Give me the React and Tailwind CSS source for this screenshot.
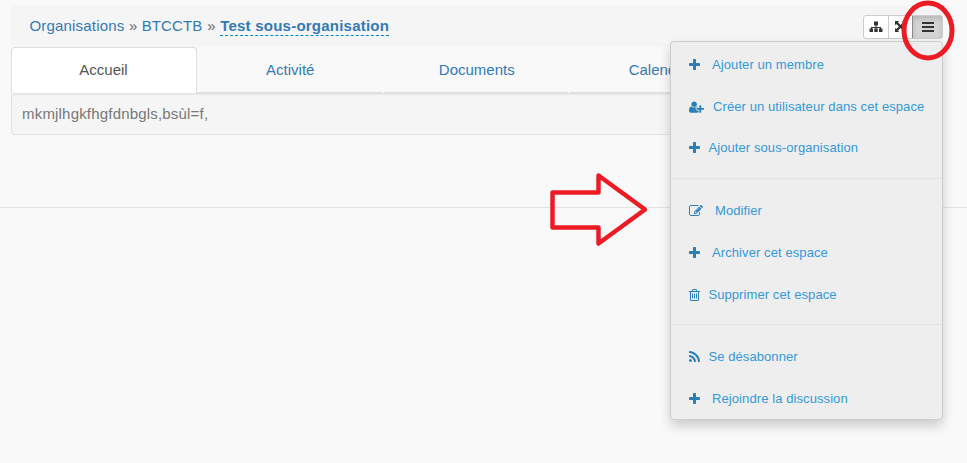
import React from "react";

const glyphs = {
  plus: {
    w: 11,
    box: "192 0 1408 1792",
    d: "M1600 736v192q0 40-28 68t-68 28h-416v416q0 40-28 68t-68 28h-192q-40 0-68-28t-28-68v-416h-416q-40 0-68-28t-28-68v-192q0-40 28-68t68-28h416v-416q0-40 28-68t68-28h192q40 0 68 28t28 68v416h416q40 0 68 28t28 68z",
  },
  userPlus: {
    w: 15,
    box: "0 0 2048 1792",
    d: "M704 896q-159 0-271.5-112.5t-112.5-271.5 112.5-271.5 271.5-112.5 271.5 112.5 112.5 271.5-112.5 271.5-271.5 112.5zm960 128h352q13 0 22.5 9.5t9.5 22.5v192q0 13-9.5 22.5t-22.5 9.5h-352v352q0 13-9.5 22.5t-22.5 9.5h-192q-13 0-22.5-9.5t-9.5-22.5v-352h-352q-13 0-22.5-9.5t-9.5-22.5v-192q0-13 9.5-22.5t22.5-9.5h352v-352q0-13 9.5-22.5t22.5-9.5h192q13 0 22.5 9.5t9.5 22.5v352zm-736 224q0 52 38 90t90 38h256v238q-68 50-171 50h-874q-121 0-194-69t-73-190q0-53 3.5-103.5t14-109 26.5-108.5 43-97.5 62-81 85.5-53.5 111.5-20q19 0 39 17 79 61 154.5 91.5t164.5 30.5 164.5-30.5 154.5-91.5q20-17 39-17 132 0 217 96h-223q-52 0-90 38t-38 90v192z",
  },
  edit: {
    w: 14,
    box: "0 0 1792 1792",
    d: "M888 1184l116-116-152-152-116 116v56h96v96h56zm440-720q-16-16-33 1l-350 350q-17 17-1 33t33-1l350-350q17-17 1-33zm80 594v190q0 119-84.5 203.5t-203.5 84.5h-832q-119 0-203.5-84.5t-84.5-203.5v-832q0-119 84.5-203.5t203.5-84.5h832q63 0 117 25 15 7 18 23 3 17-9 29l-49 49q-14 14-32 8-23-6-45-6h-832q-66 0-113 47t-47 113v832q0 66 47 113t113 47h832q66 0 113-47t47-113v-126q0-13 9-22l64-64q15-15 35-7t20 29zm-96-738l288 288-672 672h-288v-288zm444 132l-92 92-288-288 92-92q28-28 68-28t68 28l152 152q28 28 28 68t-28 68z",
  },
  trash: {
    w: 11,
    box: "192 0 1408 1792",
    d: "M704 736v576q0 14-9 23t-23 9h-64q-14 0-23-9t-9-23v-576q0-14 9-23t23-9h64q14 0 23 9t9 23zm256 0v576q0 14-9 23t-23 9h-64q-14 0-23-9t-9-23v-576q0-14 9-23t23-9h64q14 0 23 9t9 23zm256 0v576q0 14-9 23t-23 9h-64q-14 0-23-9t-9-23v-576q0-14 9-23t23-9h64q14 0 23 9t9 23zm128 724v-948h-896v948q0 22 7 40.5t14.5 27 10.5 8.5h832q3 0 10.5-8.5t14.5-27 7-40.5zm-672-1076h448l-48-117q-7-9-17-11h-317q-10 2-17 11zm928 32v64q0 14-9 23t-23 9h-96v948q0 83-47 143.5t-113 60.5h-832q-66 0-113-58.5t-47-141.5v-952h-96q-14 0-23-9t-9-23v-64q0-14 9-23t23-9h309l70-167q15-37 54-63t79-26h320q40 0 79 26t54 63l70 167h309q14 0 23 9t9 23z",
  },
  rss: {
    w: 11,
    box: "192 0 1408 1792",
    d: "M576 1344q0 80-56 136t-136 56-136-56-56-136 56-136 136-56 136 56 56 136zm512 123q2 28-17 48-18 21-47 21h-135q-25 0-43-16.5t-20-41.5q-22-229-184.5-391.5t-391.5-184.5q-25-2-41.5-20t-16.5-43v-135q0-29 21-47 17-17 43-17h5q160 13 306 80.5t259 181.5q114 113 181.5 259t80.5 306zm512 2q2 27-18 47-18 20-46 20h-143q-26 0-44.5-17.5t-19.5-42.5q-12-215-101-408.5t-231.5-336-336-231.5-408.5-102q-25-1-42.5-19.5t-17.5-43.5v-143q0-28 20-46 18-18 44-18h3q262 13 501.5 120t425.5 294q187 186 294 425.5t120 501.5z",
  },
};

function Glyph({ name }) {
  const g = glyphs[name];
  return (
    <svg width={g.w} height="14" viewBox={g.box} fill="currentColor" className="shrink-0 text-[#2980b9]">
      <path d={g.d} />
    </svg>
  );
}

function Item({ icon, gap, height = "h-[42px]", children }) {
  return (
    <li className={`flex ${height} items-center pl-[18px]`}>
      <Glyph name={icon} />
      <a className={`${gap} whitespace-nowrap`}>{children}</a>
    </li>
  );
}

function Divider({ space }) {
  return <li className={`${space} mb-[11px] h-px bg-[#e3e3e3]`} />;
}

function Menu() {
  return (
    <ul className="absolute top-[41px] left-[670px] h-[379px] w-[273px] rounded-[4px] border border-[#ccc] bg-[#eee] pt-[2px] text-[13px] tracking-[0.09px] text-[#3498db] shadow-[0_6px_12px_rgba(0,0,0,0.18)]">
      <Item icon="plus" gap="ml-[12px]">Ajouter un membre</Item>
      <Item icon="userPlus" gap="ml-[9px]">Créer un utilisateur dans cet espace</Item>
      <Item icon="plus" gap="ml-[8.400px]" height="h-[40px]">Ajouter sous-organisation</Item>
      <Divider space="mt-[10px]" />
      <Item icon="edit" gap="ml-[12px]">Modifier</Item>
      <Item icon="plus" gap="ml-[12px]">Archiver cet espace</Item>
      <Item icon="trash" gap="ml-[8.400px]">Supprimer cet espace</Item>
      <Divider space="mt-[8px]" />
      <Item icon="rss" gap="ml-[8.400px]">Se désabonner</Item>
      <Item icon="plus" gap="ml-[12px]">Rejoindre la discussion</Item>
    </ul>
  );
}

function Toolbar() {
  return (
    <div className="mt-px flex h-6 w-[80px] overflow-hidden rounded-[3px] border border-[#ccc] bg-white text-[#333]">
      <button className="flex w-[25px] items-center justify-center border-r border-[#ccc]">
        <svg width="14" height="12" viewBox="0 0 14 12" fill="currentColor">
          <path d="M5 0.500h4v4H7.500V6H12v1.500h1.500V11H10V7.500h1V7H7.500v.5H8.750V11h-3.500V7.500H6.500V7H3v.5h1V11H.5V7.500H2V6h4.500V4.500H5z" />
        </svg>
      </button>
      <button className="flex w-[23px] items-center justify-center">
        <svg width="11" height="11" viewBox="0 0 12 12" fill="currentColor">
          <path d="M0 0h4.500L3.200 1.300 6 4.300 8.800 1.300 7.500 0H12v4.500l-1.300-1.300L7.700 6l3 2.800L12 7.500V12H7.500l1.300-1.300L6 7.700l-2.800 3L4.500 12H0V7.500l1.300 1.300L4.300 6 1.300 3.200 0 4.500z" />
        </svg>
      </button>
      <button className="-my-px -mr-px flex flex-1 items-center justify-center rounded-r-[3px] border border-[#8c8c8c] bg-[#d4d4d4] shadow-[inset_0_3px_5px_rgba(0,0,0,0.125)]">
        <svg width="12" height="10" viewBox="0 0 12 10" fill="currentColor">
          <path d="M0 0h12v2H0zM0 4h12v2H0zM0 8h12v2H0z" />
        </svg>
      </button>
    </div>
  );
}

function Tab({ children }) {
  return (
    <li className="mr-[2px] flex flex-1 items-center justify-center border-b border-[#ddd] pt-[2px] pl-[2px] text-[#337ab7]">
      {children}
    </li>
  );
}

export default function App() {
  return (
    <div className="relative h-[463px] w-[967px] overflow-hidden bg-[#f9f9f9] pt-[5px] font-['Liberation_Sans',Arial,sans-serif] text-[15px] text-[#777]">
      <main className="ml-[11px] w-[932px]">
        <header className="flex h-[42px] items-center justify-between rounded-[4px] bg-[#f5f5f5] pl-[18.500px] text-[#337ab7]">
          <nav className="flex items-center whitespace-nowrap">
            <a className="tracking-[0.18px]">Organisations</a>
            <span className="mx-[4.500px] text-[#666]">»</span>
            <a className="tracking-[0.1px]">BTCCTB</a>
            <span className="mr-[4.500px] ml-[5px] text-[#666]">»</span>
            <a className="mt-px border-b border-dashed border-[#0088cc] leading-[18px] font-bold tracking-[0.23px]">Test sous-organisation</a>
          </nav>
          <Toolbar />
        </header>
        <ul className="flex h-[46px]">
          <li className="flex w-[186px] items-center justify-center rounded-t-[4px] border border-b-0 border-[#ddd] bg-white pr-px text-[#555]">Accueil</li>
          <Tab>Activité</Tab>
          <Tab>Documents</Tab>
          <Tab>Calendrier</Tab>
          <Tab>Membres</Tab>
        </ul>
        <section className="flex h-[42px] items-center rounded-[3px] border border-[#e2e2e2] bg-[#f5f5f5] pl-[10px] tracking-[0.19px] shadow-[inset_0_1px_1px_rgba(0,0,0,0.05)]">
          mkmjlhgkfhgfdnbgls,bsùl=f,
        </section>
      </main>
      <hr className="mt-[72px] border-[#e2e2e2]" />
      <Menu />
      <svg className="absolute inset-0" width="967" height="463" fill="none" stroke="#ed1c24">
        <path d="M552.500 192.500H598.500V175.500L645 209.500 598.500 243.500V227.500H552.500z" strokeWidth="4.500" strokeLinejoin="round" />
        <ellipse cx="928" cy="30.500" rx="24" ry="27.500" strokeWidth="5" />
      </svg>
    </div>
  );
}
